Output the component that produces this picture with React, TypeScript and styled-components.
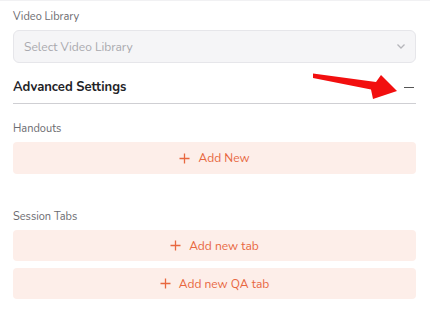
import React, { FC } from "react";
import styled, { createGlobalStyle } from "styled-components";

const GlobalStyle = createGlobalStyle`
  html, body {
    margin: 0;
    padding: 0;
    background: #ffffff;
    font-family: "Nunito", Lato, "Open Sans", sans-serif;
  }
`;

const Page = styled.div`
  position: relative;
  width: 430px;
  height: 321px;
  box-sizing: border-box;
  padding: 8px 14px 0 13px;
  border-top: 1px solid #f1f1f3;
  display: flex;
  flex-direction: column;
`;

const Label = styled.div<{ top?: number }>`
  font-size: 11px;
  line-height: 15px;
  color: #6b6b70;
  margin-top: ${({ top }) => top || 0}px;
`;

const Select = styled.div`
  margin-top: 6px;
  height: 33px;
  box-sizing: border-box;
  border: 1px solid #e6e6ea;
  border-radius: 6px;
  background: #f5f5f7;
  display: flex;
  align-items: center;
  justify-content: space-between;
  padding: 0 9px 0 10px;
  font-size: 12px;
  color: #a9a9ae;
`;

const SectionHeader = styled.div`
  margin-top: 12px;
  height: 29px;
  box-sizing: border-box;
  padding-bottom: 4px;
  display: flex;
  align-items: center;
  justify-content: space-between;
  border-bottom: 1px solid #cfcfd3;
`;

const SectionTitle = styled.span`
  font-size: 13px;
  font-weight: 700;
  color: #222226;
`;

const Minus = styled.span`
  width: 10px;
  height: 1px;
  background: #555;
  margin-right: 2px;
`;

const AddButton = styled.div<{ top?: number; h?: number }>`
  margin-top: ${({ top }) => top || 0}px;
  height: ${({ h }) => h || 32}px;
  border-radius: 4px;
  background: #fdeee9;
  color: #e8673f;
  font-size: 12px;
  display: flex;
  align-items: center;
  justify-content: center;
  gap: 8px;
`;

const Arrow = styled.svg`
  position: absolute;
  left: 0;
  top: 0;
  pointer-events: none;
`;

const Plus: FC = () => (
  <svg width="11" height="11" viewBox="0 0 11 11">
    <path d="M5.5 0.5v10M0.5 5.5h10" stroke="#e8673f" strokeWidth="1.3" />
  </svg>
);

const Chevron: FC = () => (
  <svg width="10" height="7" viewBox="0 0 10 7">
    <path d="M1.5 1.5l3.5 3.5 3.5-3.5" fill="none" stroke="#b5b5ba" strokeWidth="1.3" />
  </svg>
);

const App: FC = () => {
  return (
    <>
      <GlobalStyle />
      <Page>
        <Label>Video Library</Label>
        <Select>
          <span>Select Video Library</span>
          <Chevron />
        </Select>
        <SectionHeader>
          <SectionTitle>Advanced Settings</SectionTitle>
          <Minus />
        </SectionHeader>
        <Label top={17}>Handouts</Label>
        <AddButton top={6}>
          <Plus />
          <span>Add New</span>
        </AddButton>
        <Label top={35}>Session Tabs</Label>
        <AddButton top={6} h={31}>
          <Plus />
          <span>Add new tab</span>
        </AddButton>
        <AddButton top={7} h={31}>
          <Plus />
          <span>Add new QA tab</span>
        </AddButton>
        <Arrow width="430" height="321" viewBox="0 0 430 321">
          <polygon
            points="313,72.5 376,81 381,74 397,90 373,98 371,88.5 313,77"
            fill="#f20f0f"
          />
        </Arrow>
      </Page>
    </>
  );
};

export default App;
